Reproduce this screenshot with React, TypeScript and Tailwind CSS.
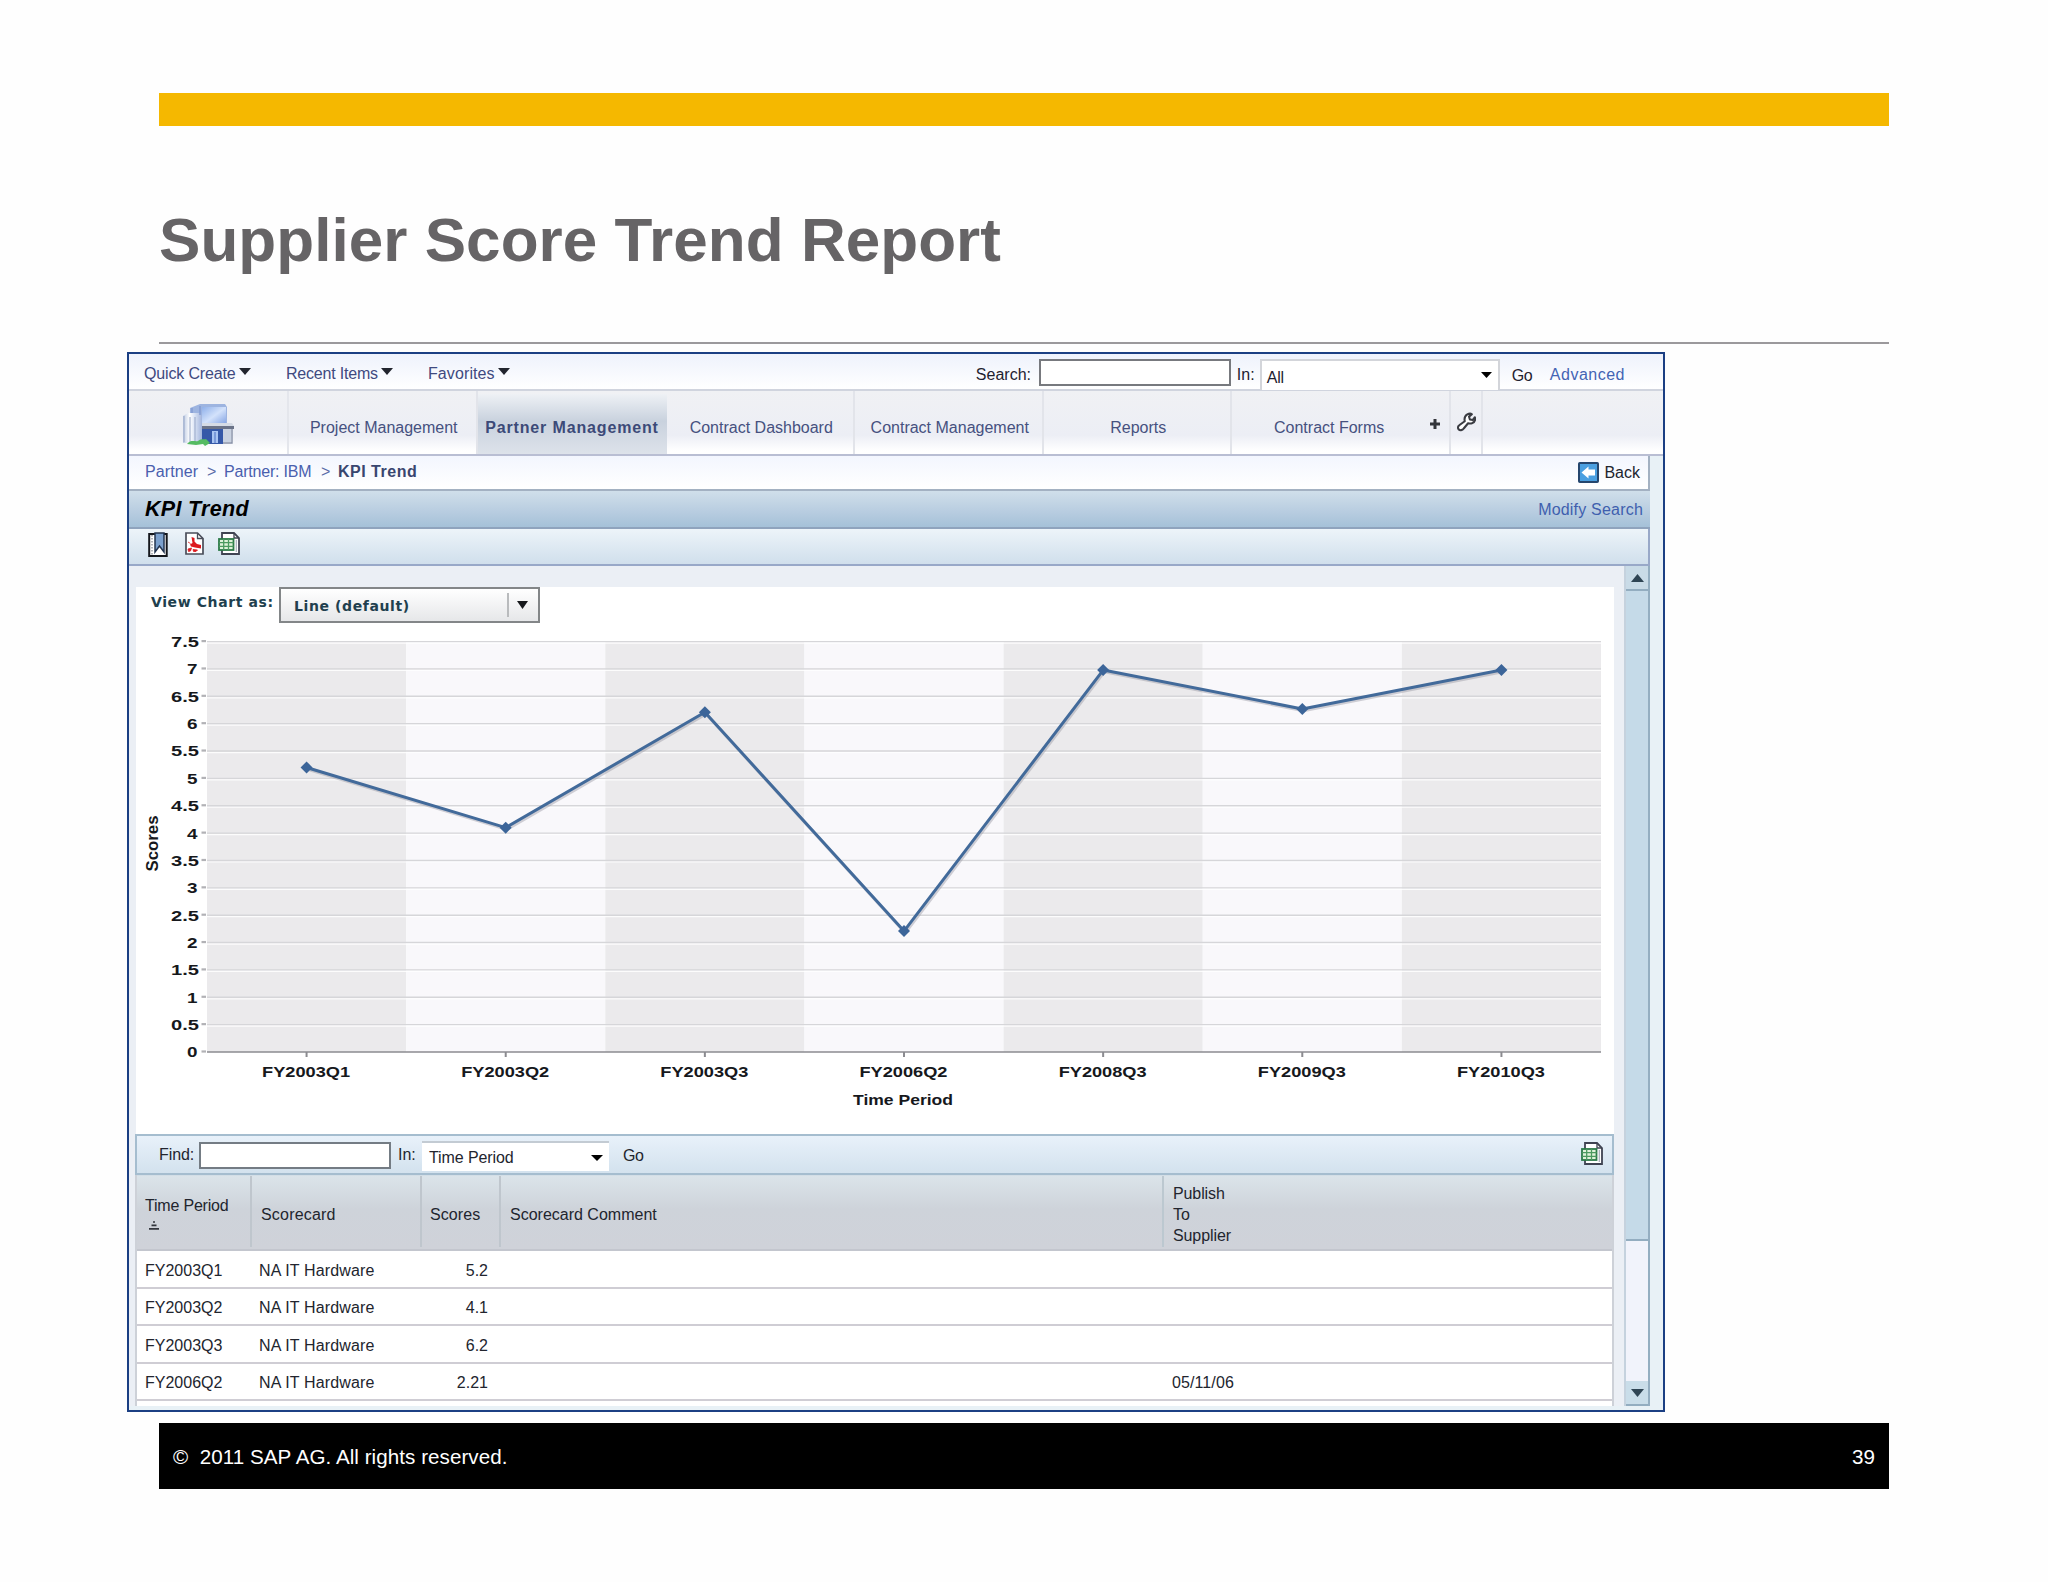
import React from 'react'

interface ScorePoint {
    period: string
    value: number
}

interface ScoreRow {
    period: string
    scorecard: string
    score: string
    published?: string
}

const points: ScorePoint[] = [
    { period: 'FY2003Q1', value: 5.2 },
    { period: 'FY2003Q2', value: 4.1 },
    { period: 'FY2003Q3', value: 6.21 },
    { period: 'FY2006Q2', value: 2.21 },
    { period: 'FY2008Q3', value: 6.98 },
    { period: 'FY2009Q3', value: 6.27 },
    { period: 'FY2010Q3', value: 6.98 },
]

const rows: ScoreRow[] = [
    { period: 'FY2003Q1', scorecard: 'NA IT Hardware', score: '5.2' },
    { period: 'FY2003Q2', scorecard: 'NA IT Hardware', score: '4.1' },
    { period: 'FY2003Q3', scorecard: 'NA IT Hardware', score: '6.2' },
    { period: 'FY2006Q2', scorecard: 'NA IT Hardware', score: '2.21', published: '05/11/06' },
]

const sans = 'font-["Liberation_Sans",Arial,sans-serif]'

function Caret({ className = '', up = false }: { className?: string; up?: boolean }) {
    return (
        <svg className={className} viewBox="0 0 12 7" preserveAspectRatio="none" fill="currentColor">
            <path d={up ? 'M0 7L6 0L12 7Z' : 'M0 0H12L6 7Z'} />
        </svg>
    )
}

function BuildingIcon() {
    return (
        <svg className="w-[54px] h-[44px]" viewBox="0 0 54 44">
            <defs>
                <linearGradient id="glass" x1="0" y1="0" x2="1" y2="1">
                    <stop offset="0" stopColor="#8fb0ea" />
                    <stop offset="0.5" stopColor="#d3e2fb" />
                    <stop offset="1" stopColor="#7fa0e2" />
                </linearGradient>
                <linearGradient id="tower" x1="0" y1="0" x2="1" y2="0">
                    <stop offset="0" stopColor="#bcc9e2" />
                    <stop offset="0.35" stopColor="#ffffff" />
                    <stop offset="0.6" stopColor="#dbe4f5" />
                    <stop offset="1" stopColor="#a3b5dc" />
                </linearGradient>
            </defs>
            <path d="M8 5L18 1H43L45 4V23H8Z" fill="#9db4e0" />
            <rect x="20" y="4" width="24" height="18" fill="url(#glass)" />
            <path d="M1 13L6 10H18L20 13V40H1Z" fill="url(#tower)" />
            <path d="M2 13V39M8 14V39M13 14V39" stroke="#9dacca" strokeWidth="1.1" />
            <path d="M10 5V10M18 3V12" stroke="#7f98d2" strokeWidth="1.3" />
            <path d="M20 20H50L52 23H20Z" fill="#d5dbe5" />
            <path d="M20 23H52V26H20Z" fill="#6b7388" />
            <rect x="20" y="26" width="21" height="15" fill="#3558a8" />
            <rect x="30" y="28" width="6" height="12" fill="#a9c4f2" />
            <path d="M33 29V40" stroke="#4a6fc0" />
            <rect x="41" y="26" width="8" height="13" fill="#c9d2e1" />
            <path d="M41 40H50V26" stroke="#8690a6" strokeWidth="1.4" fill="none" />
            <path d="M5 41C9 36 13 39 16 38C20 35 22 37 24 36L28 40L23 43L21 41L14 42Z" fill="#55bb62" />
        </svg>
    )
}

function BookmarkIcon() {
    return (
        <svg className="w-5 h-[26px]" viewBox="0 0 20 26">
            <rect x="1.2" y="2" width="17.5" height="22" fill="#fff" stroke="#15171c" strokeWidth="2" />
            <path d="M4 3V23" stroke="#8b8f98" strokeWidth="1.3" strokeDasharray="1.5 1.5" />
            <path d="M7 1H16V20L11.5 14L7 20Z" fill="#7ba0cd" stroke="#23344f" strokeWidth="1.5" />
        </svg>
    )
}

function PdfIcon() {
    return (
        <svg className="w-[19px] h-[23px]" viewBox="0 0 19 23">
            <path d="M1 1H12.5L18 6.5V22H1Z" fill="#fff" stroke="#4a4e5a" strokeWidth="1.7" />
            <path d="M12.5 1V6.5H18" fill="none" stroke="#4a4e5a" strokeWidth="1.3" />
            <path d="M6.5 5L9.5 6V9.5L12 12L16 13V16.5L10 15.5L6 14.5L5 12.5L7.5 11Z" fill="#dc1a1f" />
            <path d="M3 10L5.5 11.5M3 17L6.5 16L5.5 19L3.5 19.5ZM8 17.5L12.5 18L11 19.5H8.5Z" fill="#dc1a1f" stroke="#dc1a1f" strokeWidth="0.8" />
        </svg>
    )
}

function ExcelIcon() {
    return (
        <svg className="w-[22px] h-[23px]" viewBox="0 0 22 23">
            <path d="M4 1H16L21 6V22H4Z" fill="#fff" stroke="#3f4352" strokeWidth="1.8" />
            <path d="M16 1V6H21" fill="none" stroke="#3f4352" strokeWidth="1.3" />
            <path d="M18.3 8V20" stroke="#a9aebb" strokeWidth="1.2" />
            <rect x="1" y="7" width="14.5" height="11" fill="#dff2d9" stroke="#2c7a47" strokeWidth="1.8" />
            <path d="M5.7 7V18M10.5 7V18M1 10.7H15.5M1 14.4H15.5" stroke="#4c9a5f" strokeWidth="1.3" />
        </svg>
    )
}

function WrenchIcon() {
    return (
        <svg className="w-[19px] h-5" viewBox="0 0 24 24" fill="#fff" stroke="#3a3c42" strokeWidth="2.6" strokeLinejoin="round">
            <path d="M13 2.5C15.5 1 17.5 1.2 18.8 2.2L15.2 5.2L16.3 8.8L20 9.4L22.6 6C23.4 9.5 21.8 12.5 18.8 13.6C17 14.2 15.5 13.9 14 13.6L8.5 20.2C6.8 22.6 3.6 23 2 21.2C.6 19.4 1.2 17 3.2 15.8L9.8 11C9 7.5 10 4.3 13 2.5Z" />
        </svg>
    )
}

function BackIcon() {
    return (
        <svg className="w-[21px] h-[21px]" viewBox="0 0 21 21">
            <rect x="1" y="1" width="19" height="19" rx="0.8" fill="#4a9fe0" stroke="#25466e" strokeWidth="2" />
            <path d="M3.5 10.5L10.5 4.5V7.5H17V13.5H10.5V16.5Z" fill="#fff" />
        </svg>
    )
}

function MenuBar() {
    return (
        <div className="flex h-[37px] border-b-2 border-[#d0d4de] bg-linear-to-b from-[#eef2fc] to-white text-[#3f4a80]">
            <div className="flex items-center h-[39px] pl-[15px] shrink-0">
                <span className="w-[95px] tracking-[-0.15px]">Quick Create</span>
                <Caret className="w-3 h-[7px] text-[#22252e] -mt-1" />
                <span className="w-[95px] ml-[35px] tracking-[-0.2px]">Recent Items</span>
                <Caret className="w-3 h-[7px] text-[#22252e] -mt-1" />
                <span className="w-[70px] ml-[35px] tracking-[0.1px]">Favorites</span>
                <Caret className="w-3 h-[7px] text-[#22252e] -mt-1" />
            </div>
            <div className="flex ml-auto pt-[5px] pr-[38px] shrink-0 text-[#1f2230]">
                <span className="leading-[31px] w-[63px]">Search:</span>
                <div className="w-[192px] h-[27px] bg-white border-2 border-[#77797e]" />
                <span className="leading-[31px] ml-[6px] w-[23px]">In:</span>
                <div className="flex items-center justify-between w-[240px] h-[31px] bg-white border-2 border-b-0 border-[#d3d5da] pl-[5px] pr-[6px] pt-[3px]">
                    <span className="tracking-[-0.3px]">All</span>
                    <Caret className="w-[11px] h-[6px] text-black -mt-1" />
                </div>
                <span className="leading-[33px] ml-[12px] w-[38px] tracking-[-0.4px]">Go</span>
                <span className="leading-[31px] tracking-[0.5px] text-[#4464b4]">Advanced</span>
            </div>
        </div>
    )
}

function NavTabs() {
    const tabs = ['Project Management', 'Partner Management', 'Contract Dashboard', 'Contract Management', 'Reports']
    return (
        <div className="flex h-[65px] border-b-2 border-[#b9bed3] bg-linear-to-b from-[#f0f1f4] from-0% via-[#eceef5] via-70% to-white to-95% text-[#46517f]">
            <div className="w-[160px] pl-[53px] pt-[12px] border-r-2 border-[#e4e6ec]">
                <BuildingIcon />
            </div>
            {tabs.map(tab => {
                const active = tab === 'Partner Management'
                return (
                    <div key={tab}
                         className={active
                             ? 'w-[189px] h-[60px] mt-[3px] pt-[23px] text-center font-bold tracking-[0.85px] text-[#3c4a78] bg-linear-to-b from-[#eef1f5] via-[#c9d2de] via-45% to-[#dde2ea]'
                             : 'w-[188.5px] pt-[26px] pl-[3px] text-center border-r-2 border-[#e2e4ea]'}>
                        {tab}
                    </div>
                )
            })}
            <div className="flex w-[219px] pt-[26px] pl-[42px] border-r-2 border-[#e2e4ea]">
                <span className="w-[156px]">Contract Forms</span>
                <svg className="w-[10px] h-[10px] mt-[2px]" viewBox="0 0 10 10">
                    <path d="M5 0V10M0 5H10" stroke="#33353b" strokeWidth="3" />
                </svg>
            </div>
            <div className="w-[32px] pt-[21px] pl-[6px] border-r-2 border-[#e2e4ea]">
                <WrenchIcon />
            </div>
        </div>
    )
}

function ReportHeader() {
    return (
        <>
            <div className="flex items-center h-[35px] w-[1521px] border-b-2 border-r-2 border-[#a3b1c2] bg-linear-to-b from-[#f3f6fe] to-white pl-[16px] pr-[8px] pb-[3px] text-[#4a5fae]">
                <span className="w-[62px] tracking-[0.1px]">Partner</span>
                <span className="w-[17px] text-[#5a6ba8]">&gt;</span>
                <span className="w-[97px] tracking-[-0.2px]">Partner: IBM</span>
                <span className="w-[17px] text-[#5a6ba8]">&gt;</span>
                <span className="font-bold tracking-[0.5px] text-[#39466f]">KPI Trend</span>
                <div className="flex items-center gap-[5px] ml-auto text-[#22252e] pt-[3px]">
                    <BackIcon />
                    <span>Back</span>
                </div>
            </div>
            <div className="flex items-center justify-between h-[38px] w-[1521px] border-b-2 border-[#8fa3bd] bg-linear-to-b from-[#d0dfea] via-[#b7cce0] via-60% to-[#a5c1d8] pl-[16px] pr-[7px]">
                <h2 className="font-bold italic text-[21.5px] tracking-[0.3px] pt-[1px] text-black">KPI Trend</h2>
                <span className="tracking-[0.2px] text-[#3f5fae]">Modify Search</span>
            </div>
            <div className="flex items-start h-[37px] w-[1521px] border-b-2 border-r-2 border-[#98a8c8] bg-linear-to-b from-[#edf4f9] to-[#d0dfec] pl-[19px] pt-[3px]">
                <BookmarkIcon />
                <div className="ml-[17px]"><PdfIcon /></div>
                <div className="ml-[14px]"><ExcelIcon /></div>
            </div>
        </>
    )
}

function TrendChart() {
    const left = 207
    const right = 1601
    const bottom = 1052.5
    const step = 27.36
    const band = (right - left) / points.length
    const x = (i: number) => left + band * (i + 0.5)
    const y = (v: number) => bottom - v * step * 2
    const ticks = Array.from({ length: 16 }, (_, i) => i / 2)
    const line = points.map((p, i) => `${x(i)},${y(p.value)}`).join(' ')

    return (
        <svg className="block w-[1478px] h-[510px]" viewBox="136 624.5 1478 510" fontWeight="bold" fill="#16181c">
            {points.map((p, i) => (
                <rect key={p.period} x={left + band * i} y={y(7.5)} width={band} height={bottom - y(7.5)} fill={i % 2 ? '#f9f8fb' : '#ebeaec'} />
            ))}
            {ticks.map(t => (
                <g key={t}>
                    {t > 0 && <path d={`M${left} ${y(t)}H${right}`} stroke="#d6d6d9" strokeWidth="1.4" />}
                    {t > 0 && <path d={`M${left} ${y(t) + 1.5}H${right}`} stroke="#ffffff" strokeWidth="1.2" strokeOpacity="0.85" />}
                    <path d={`M201.5 ${y(t) - 0.5}H206`} stroke="#b2b2b6" strokeWidth="2.2" />
                    <text x={Number.isInteger(t) ? 197.5 : 199} y={y(t) + 5.4} textAnchor="end" fontSize="14.5"
                          textLength={Number.isInteger(t) ? 10.5 : 28} lengthAdjust="spacingAndGlyphs">
                        {t}
                    </text>
                </g>
            ))}
            <path d={`M${left} ${bottom}H${right}`} stroke="#8b8b90" strokeWidth="1.6" />
            {points.map((p, i) => (
                <g key={p.period}>
                    <path d={`M${x(i)} ${bottom}V${bottom + 5}`} stroke="#8b8b90" strokeWidth="2" />
                    <text x={x(i) - 44.5} y="1077.2" fontSize="14.8" textLength="88" lengthAdjust="spacingAndGlyphs">{p.period}</text>
                </g>
            ))}
            <polyline points={line} transform="translate(1.2 1.8)" fill="none" stroke="#9a9aa4" strokeOpacity="0.45" strokeWidth="3" />
            <polyline points={line} fill="none" stroke="#426a9a" strokeWidth="3" strokeLinejoin="round" />
            {points.map((p, i) => (
                <path key={p.period} d={`M${x(i)} ${y(p.value) - 6}l6 6l-6 6l-6 -6Z`} fill="#3c6599" />
            ))}
            <text x="853" y="1105.5" fontSize="15.5" textLength="100" lengthAdjust="spacingAndGlyphs">Time Period</text>
            <text transform="translate(157.5 872) rotate(-90)" fontSize="16" textLength="56" lengthAdjust="spacingAndGlyphs">Scores</text>
        </svg>
    )
}

function FindBar() {
    return (
        <div className="flex h-[41px] -ml-[1px] border-2 border-[#a5bdcf] bg-linear-to-b from-[#e8f1fa] to-[#d3e2ee] pl-[22px] pr-[9px] pt-[6px] text-[#22252e]">
            <span className="leading-[25px] w-[40px] tracking-[-0.1px]">Find:</span>
            <div className="w-[192px] h-[27px] bg-white border-2 border-[#747c84]" />
            <span className="leading-[25px] ml-[7px] w-[24px]">In:</span>
            <div className="flex items-center justify-between w-[187px] h-[30px] -mt-[1px] bg-white border-t-2 border-[#c3cbd3] pl-[7px] pr-[6px] pt-[1px]">
                <span className="tracking-[-0.1px]">Time Period</span>
                <Caret className="w-[12px] h-[6px] text-black" />
            </div>
            <span className="leading-[28px] ml-[14px] tracking-[-0.4px]">Go</span>
            <div className="ml-auto"><ExcelIcon /></div>
        </div>
    )
}

function ScoreTable() {
    const columns = 'grid grid-cols-[115px_170px_79px_663px_1fr]'
    return (
        <div className="-ml-[1px] border-x-2 border-[#cdd1d8] text-[#22252e] flex-1 overflow-hidden">
            <div className={`${columns} h-[76px] bg-linear-to-b from-[#dbe4ea] via-[#ced3da] via-45% to-[#cfd2d9] border-t border-b-2 border-t-[#d3dee6] border-b-[#c3c6ce]`}>
                <div className="mb-[2px] border-r-2 border-[#bfc6cd] pl-[8px] pt-[19px]">
                    <div className="tracking-[-0.2px]">Time Period</div>
                    <svg className="w-[10px] h-[9px] mt-[5px] ml-[4px]" viewBox="0 0 10 9">
                        <path d="M4 1H6M2.5 4.3H7.5M0 7.8H10" stroke="#33363d" strokeWidth="1.7" />
                    </svg>
                </div>
                <div className="mb-[2px] border-r-2 border-[#bfc6cd] pl-[9px] pt-[28px] tracking-[0.2px]">Scorecard</div>
                <div className="mb-[2px] border-r-2 border-[#bfc6cd] pl-[8px] pt-[28px] tracking-[0.1px]">Scores</div>
                <div className="mb-[2px] border-r-2 border-[#bcc8d0] pl-[9px] pt-[28px]">Scorecard Comment</div>
                <div className="pl-[9px] pt-[7px] leading-[21px] tracking-[-0.1px]">Publish<br />To<br />Supplier</div>
            </div>
            {rows.map(row => (
                <div key={row.period} className={`${columns} h-[37.5px] items-center bg-white border-b-2 border-[#cfcdd4] pt-[3px]`}>
                    <span className="pl-[8px]">{row.period}</span>
                    <span className="pl-[7px] tracking-[0.15px]">{row.scorecard}</span>
                    <span className="text-right pr-[13px]">{row.score}</span>
                    <span />
                    <span className="pl-[8px] tracking-[0.1px]">{row.published}</span>
                </div>
            ))}
            <div className="h-[6px] bg-white" />
        </div>
    )
}

function Scrollbar() {
    return (
        <div className="flex flex-col w-[26px] h-[840px] bg-[#f1f3fb] border-x-2 border-l-[#c5d2de] border-r-[#94aec1]">
            <div className="flex items-center justify-center h-[25px] bg-[#c9dbe7] border-b-2 border-[#93adc0]">
                <Caret up className="w-[13px] h-[8px] text-[#2f4554]" />
            </div>
            <div className="h-[650px] bg-[#c5dae8] border-b-2 border-[#93adc0]" />
            <div className="flex items-center justify-center mt-auto h-[25px] bg-[#c9dde9] border-b-2 border-[#93adc0]">
                <Caret className="w-[13px] h-[8px] text-[#2f4554]" />
            </div>
        </div>
    )
}

export default function App() {
    return (
        <div className={`${sans} w-[2048px] h-[1582px] bg-[#fefefe] overflow-hidden text-[16px] leading-[21px] whitespace-nowrap`}>
            <div className="ml-[159px] w-[1730px] h-[33px] mt-[93px] bg-[#f5b800]" />
            <div className="ml-[159px] w-[1730px] h-[218px] border-b-2 border-[#9b999c] pt-[79px]">
                <h1 className="text-[62px] leading-[70px] tracking-[0.05px] font-bold text-[#666466]">Supplier Score Trend Report</h1>
            </div>

            <div className="flex flex-col ml-[127px] mt-[8px] w-[1538px] h-[1060px] border-2 border-[#1b3f83] bg-[#e8f1f6] overflow-hidden">
                <MenuBar />
                <NavTabs />
                <ReportHeader />
                <div className="flex flex-1">
                    <div className="flex flex-col w-[1495px] h-[840px] pl-[7px] pr-[10px] pt-[21px] bg-[#ebeff5]">
                        <div className="flex h-[37px] bg-white pl-[15px]">
                            <span className='w-[128px] pt-[5px] text-[14px] tracking-[0.6px] font-bold text-[#213f4e] font-["DejaVu_Sans",Verdana,sans-serif]'>View Chart as:</span>
                            <div className='flex items-center w-[261px] h-[36px] border-2 border-[#838688] bg-linear-to-b from-white to-[#e6e7e9] pl-[13px] text-[14px] font-bold text-[#213f4e] font-["DejaVu_Sans",Verdana,sans-serif]'>
                                <span className="pt-[2px] tracking-[0.6px]">Line (default)</span>
                                <div className="ml-auto w-[2px] h-[24px] bg-[#b9bbbd]" />
                                <Caret className="w-[11px] h-[8px] ml-[8px] mr-[10px] text-[#17191c]" />
                            </div>
                        </div>
                        <div className="bg-white h-[510px]">
                            <TrendChart />
                        </div>
                        <FindBar />
                        <ScoreTable />
                    </div>
                    <Scrollbar />
                </div>
            </div>

            <div className="flex items-center justify-between ml-[159px] mt-[11px] w-[1730px] h-[66px] bg-black text-white text-[20.6px] pl-[14px] pr-[14px]">
                <span className="whitespace-pre tracking-[0.05px]">©  2011 SAP AG. All rights reserved.</span>
                <span>39</span>
            </div>
        </div>
    )
}
